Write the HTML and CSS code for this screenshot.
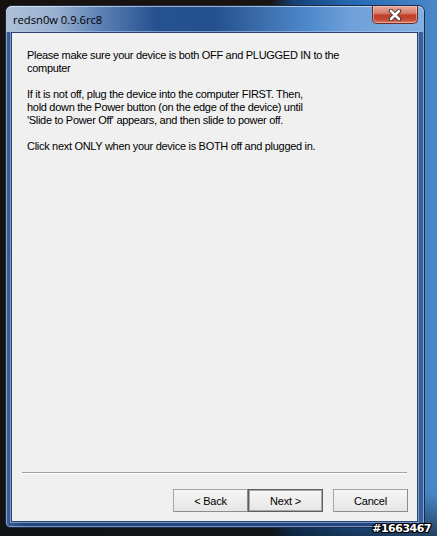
FILE: index.html
```html
<!DOCTYPE html>
<html>
<head>
<meta charset="utf-8">
<link rel="stylesheet" href="styles.css">
</head>
<body>
<div class="desktop">
  <div class="window">
    <div class="titlebar">
      <div class="title">redsn0w 0.9.6rc8</div>
      <div class="close">
        <svg width="14" height="12" viewBox="0 0 14 12">
          <path d="M3 2 L11 10 M11 2 L3 10" stroke="#3a2a2a" stroke-width="4.4" stroke-linecap="round" fill="none"/>
          <path d="M3 2 L11 10 M11 2 L3 10" stroke="#ffffff" stroke-width="2.6" stroke-linecap="round" fill="none"/>
        </svg>
      </div>
    </div>
    <div class="client">
      <div class="message">
        <p>Please make sure your device is both OFF and PLUGGED IN to the<br>computer</p>
        <p>If it is not off, plug the device into the computer FIRST. Then,<br>hold down the Power button (on the edge of the device) until<br>'Slide to Power Off' appears, and then slide to power off.</p>
        <p>Click next ONLY when your device is BOTH off and plugged in.</p>
      </div>
      <div class="separator"></div>
      <div class="buttons">
        <button class="btn">&lt; Back</button>
        <button class="btn btn-default">Next &gt;</button>
        <button class="btn btn-cancel">Cancel</button>
      </div>
    </div>
  </div>
  <div class="watermark">#1663467</div>
</div>
</body>
</html>
```
FILE: styles.css
```css
html, body {
  margin: 0;
  padding: 0;
}
body {
  width: 437px;
  height: 536px;
  overflow: hidden;
}
.desktop {
  position: relative;
  width: 437px;
  height: 536px;
  padding-top: 5px;
  padding-left: 5px;
  box-sizing: border-box;
  background:
    linear-gradient(180deg, rgba(0,0,0,0) 0, rgba(0,0,0,0) 92%, rgba(10,20,30,0.6) 100%),
    linear-gradient(90deg, #16110e 0, #1a1411 62%, #173f73 67%, #2468b2 80%, #4a88c8 100%);
}
.window {
  width: 420px;
  height: 523px;
  box-sizing: border-box;
  border: 1px solid #1b2c48;
  border-radius: 7px 7px 5px 5px;
  display: flex;
  flex-direction: column;
  background:
    linear-gradient(90deg, #3b5f93 0, #22477f 4%, #22467f 96%, #3a64a0 100%);
  box-shadow: inset 0 0 0 1px rgba(190, 215, 245, 0.55);
}
.titlebar {
  height: 26px;
  display: flex;
  justify-content: space-between;
  align-items: flex-start;
  padding: 0 6px 0 7px;
  border-radius: 6px 6px 0 0;
  background: linear-gradient(90deg, #afc1d8 0, #98b0cf 12%, #5f83b7 22%, #24518f 36%, #24508f 50%, #3a6aa8 60%, #4d88cc 72%, #6e9fd8 82%, #84b0e0 100%);
  box-shadow: inset 0 1px 0 rgba(255,255,255,0.55);
}
.title {
  padding-top: 6px;
  font-family: "Open Sans", "Noto Sans", sans-serif;
  font-size: 11.2px;
  line-height: 15px;
  color: #000;
}
.close {
  width: 46px;
  height: 18px;
  box-sizing: border-box;
  border: 1px solid #6a2e28;
  border-top: none;
  border-radius: 0 0 5px 5px;
  background: linear-gradient(180deg, #e8a79a 0, #d68170 40%, #c0402a 55%, #c44a33 80%, #d9806a 100%);
  box-shadow: inset 0 0 0 1px rgba(255,220,210,0.45);
  display: flex;
  align-items: center;
  justify-content: center;
}
.close svg {
  display: block;
}
.client {
  flex: 1;
  margin: 0 6px 5px 5px;
  border: 1px solid #2a4472;
  box-shadow: 0 0 0 1px rgba(170, 200, 240, 0.6);
  background: #f0f0f0;
  display: flex;
  flex-direction: column;
}
.message {
  flex: 1;
  padding: 16px 0 0 15px;
  font-family: "Liberation Sans", Arial, sans-serif;
  font-size: 11px;
  line-height: 13px;
  letter-spacing: -0.3px;
  color: #000;
}
.message p {
  margin: 0 0 13px 0;
}
.separator {
  height: 1px;
  margin: 0 10px;
  background: #a0a0a0;
  border-bottom: 1px solid #ffffff;
}
.buttons {
  display: flex;
  justify-content: flex-end;
  padding: 15px 9px 9px 0;
}
.btn {
  width: 75px;
  height: 23px;
  margin: 0;
  padding: 0;
  box-sizing: border-box;
  border: 1px solid #a5a5a5;
  border-right-color: #8c8c8c;
  border-bottom-color: #8c8c8c;
  background: linear-gradient(180deg, #f6f6f6 0, #eeeeee 50%, #e6e6e6 100%);
  font-family: "Liberation Sans", Arial, sans-serif;
  font-size: 11px;
  letter-spacing: -0.2px;
  color: #000;
}
.btn-default {
  border: 1px solid #5e5e5e;
  box-shadow: inset 0 0 0 1px #a8a8a8;
}
.btn-cancel {
  margin-left: 10px;
}
.watermark {
  position: absolute;
  right: 6px;
  bottom: 1px;
  font-family: "DejaVu Sans", Verdana, sans-serif;
  font-weight: bold;
  font-size: 11px;
  line-height: 13px;
  letter-spacing: -0.5px;
  color: #ffffff;
  text-shadow: 1px 0 0 #000, -1px 0 0 #000, 0 1px 0 #000, 0 -1px 0 #000, 1px 1px 0 #000, -1px -1px 0 #000, 1px -1px 0 #000, -1px 1px 0 #000;
}
```
